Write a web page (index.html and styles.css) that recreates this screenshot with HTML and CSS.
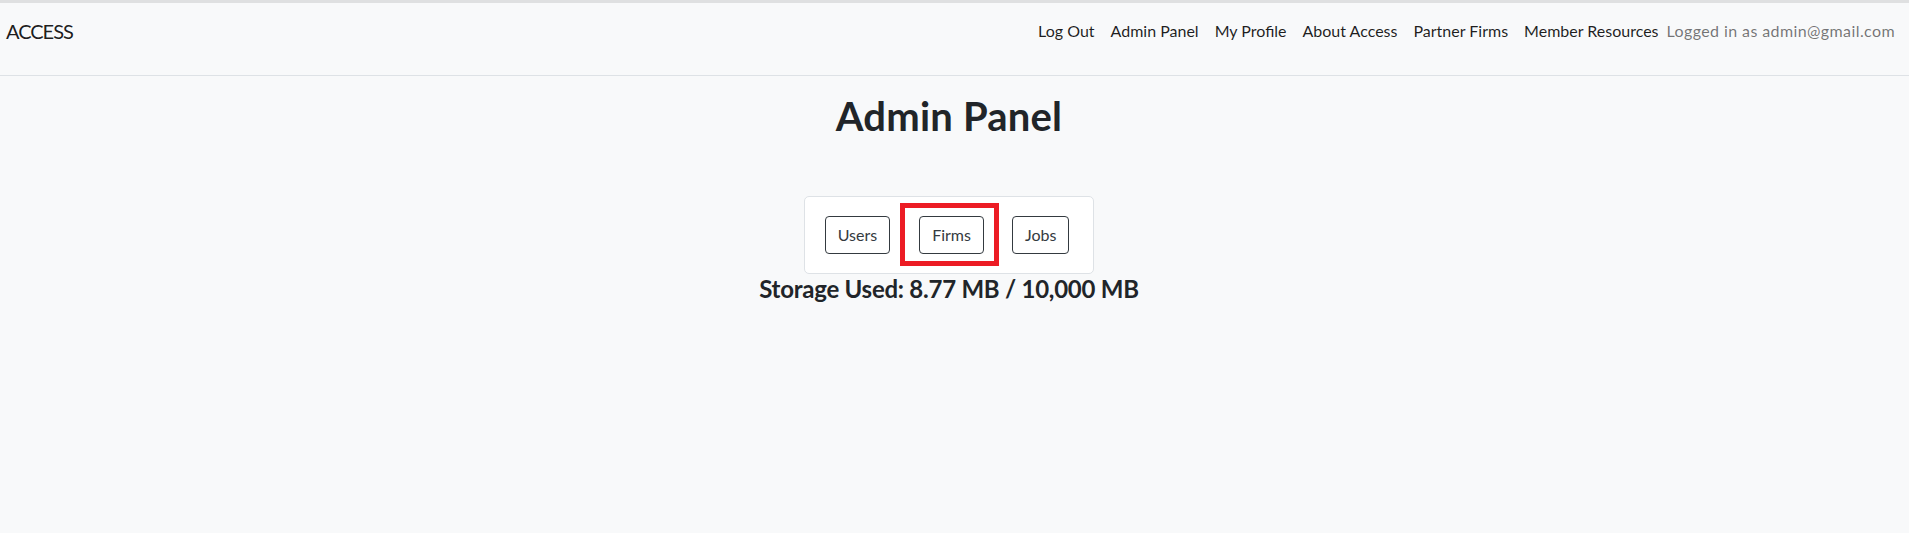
FILE: index.html
```html
<!DOCTYPE html>
<html lang="en">
<head>
<meta charset="utf-8">
<title>Admin Panel</title>
<link rel="stylesheet" href="styles.css">
</head>
<body>
<nav class="navbar">
  <a class="brand" href="#">ACCESS</a>
  <div class="nav">
    <a class="nav-link" href="#">Log Out</a>
    <a class="nav-link" href="#">Admin Panel</a>
    <a class="nav-link" href="#">My Profile</a>
    <a class="nav-link" href="#">About Access</a>
    <a class="nav-link" href="#">Partner Firms</a>
    <a class="nav-link" href="#">Member Resources</a>
    <span class="nav-text">Logged in as admin@gmail.com</span>
  </div>
</nav>
<main class="main">
  <h1 class="title">Admin Panel</h1>
  <div class="card">
    <button class="btn">Users</button>
    <span class="highlight"><button class="btn">Firms</button></span>
    <button class="btn btn-jobs">Jobs</button>
  </div>
  <h4 class="storage">Storage Used: 8.77 MB / 10,000 MB</h4>
</main>
</body>
</html>
```

FILE: styles.css
```css
html, body {
  margin: 0;
  padding: 0;
}
body {
  background: #f8f9fa;
  border-top: 3px solid #dfe0e1;
  font-family: Lato, "Noto Sans", sans-serif;
  color: #212529;
  min-height: 530px;
}
.navbar {
  height: 73px;
  box-sizing: border-box;
  padding: 13px 14px 0 6px;
  border-bottom: 1px solid #dee2e6;
  display: flex;
  align-items: flex-start;
  justify-content: space-between;
}
.brand {
  font-size: 20px;
  line-height: 30px;
  letter-spacing: -1px;
  color: rgba(0, 0, 0, 0.9);
  text-decoration: none;
}
.nav {
  display: flex;
  align-items: center;
  height: 30px;
}
.nav-link {
  font-size: 16px;
  line-height: 24px;
  padding: 0 8px;
  color: rgba(0, 0, 0, 0.88);
  text-decoration: none;
}
.nav-text {
  font-size: 16px;
  line-height: 24px;
  letter-spacing: 0.4px;
  color: rgba(0, 0, 0, 0.55);
}
.main {
  display: flex;
  flex-direction: column;
  align-items: center;
  padding: 16px 11px 0 0;
}
.title {
  margin: 0 0 56px;
  font-size: 40px;
  line-height: 48px;
  font-weight: 700;
  letter-spacing: 0.2px;
}
.card {
  display: flex;
  align-items: center;
  gap: 10px;
  padding: 6px 24px 7px 20px;
  background: #fff;
  border: 1px solid #dee2e6;
  border-radius: 5px;
}
.btn {
  font-family: inherit;
  font-size: 16px;
  line-height: 24px;
  padding: 6px 12px;
  background: #fff;
  color: #343a40;
  border: 1px solid #343a40;
  border-radius: 4px;
}
.highlight {
  display: inline-flex;
  border: 5px solid #ec1c24;
  padding: 8px 10px 7px 14px;
}
.btn-jobs {
  margin-left: 3px;
}
.storage {
  margin: 0;
  font-size: 24px;
  line-height: 29px;
  font-weight: 700;
  letter-spacing: -0.25px;
}
```
